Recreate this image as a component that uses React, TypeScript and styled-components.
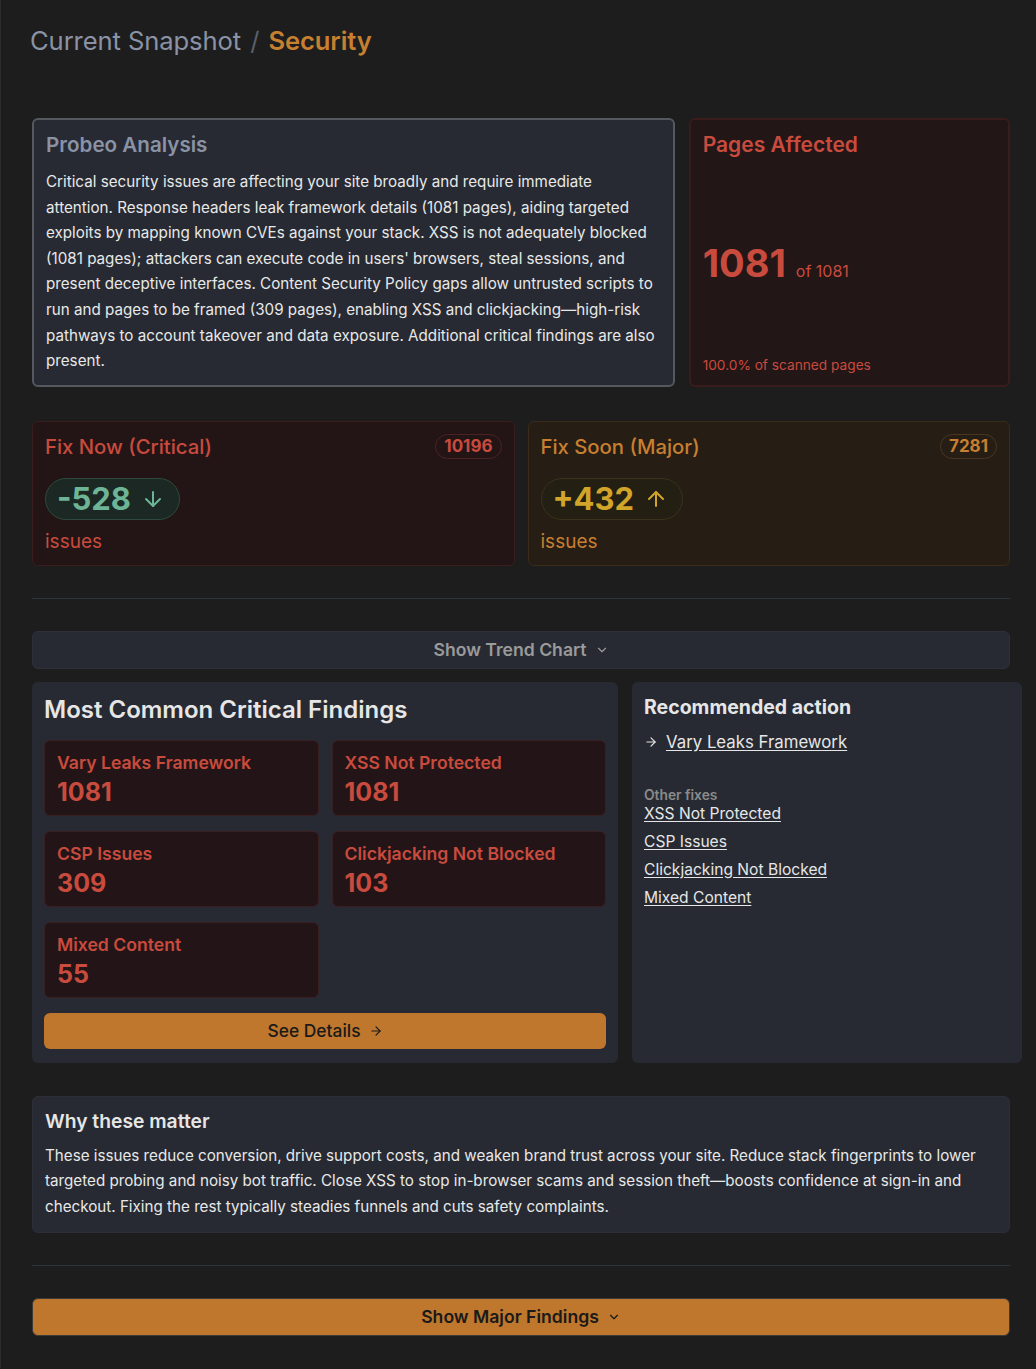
import styled, { createGlobalStyle } from "styled-components";
import { ArrowDown, ArrowUp, ArrowRight, ChevronDown } from "lucide-react";

const GlobalStyle = createGlobalStyle`
  body {
    margin: 0;
    background: #1d1d1d;
    font-family: Inter, "Noto Sans", "Liberation Sans", sans-serif;
    color: #e6e6e6;
    border-left: 1px solid #2b2b2b;
  }
  * {
    box-sizing: border-box;
  }
`;

const RED = "#c84b3e";
const ORANGE = "#c77f30";

const findings = [
  { label: "Vary Leaks Framework", count: 1081 },
  { label: "XSS Not Protected", count: 1081 },
  { label: "CSP Issues", count: 309 },
  { label: "Clickjacking Not Blocked", count: 103 },
  { label: "Mixed Content", count: 55 },
];

const otherFixes = ["XSS Not Protected", "CSP Issues", "Clickjacking Not Blocked", "Mixed Content"];

const App = () => {
  return (
    <>
      <GlobalStyle />
      <Page>
        <Crumbs>
          Current Snapshot <Slash>/</Slash> <Current>Security</Current>
        </Crumbs>

        <TopRow>
          <AnalysisCard>
            <AnalysisTitle>Probeo Analysis</AnalysisTitle>
            <Body>
              Critical security issues are affecting your site broadly and require immediate
              attention. Response headers leak framework details (1081 pages), aiding targeted
              exploits by mapping known CVEs against your stack. XSS is not adequately blocked
              (1081 pages); attackers can execute code in users' browsers, steal sessions, and
              present deceptive interfaces. Content Security Policy gaps allow untrusted scripts to
              run and pages to be framed (309 pages), enabling XSS and clickjacking—high-risk
              pathways to account takeover and data exposure. Additional critical findings are also
              present.
            </Body>
          </AnalysisCard>
          <AffectedCard>
            <AffectedTitle>Pages Affected</AffectedTitle>
            <AffectedValue>
              <Big>1081</Big>
              <Of>of 1081</Of>
            </AffectedValue>
            <AffectedNote>100.0% of scanned pages</AffectedNote>
          </AffectedCard>
        </TopRow>

        <FixRow>
          <FixCard $tone="critical">
            <FixHead>
              <FixTitle $tone="critical">Fix Now (Critical)</FixTitle>
              <Badge $tone="critical">10196</Badge>
            </FixHead>
            <Delta $tone="down">
              -528 <ArrowDown size={24} strokeWidth={2} />
            </Delta>
            <Issues $tone="critical">issues</Issues>
          </FixCard>
          <FixCard $tone="major">
            <FixHead>
              <FixTitle $tone="major">Fix Soon (Major)</FixTitle>
              <Badge $tone="major">7281</Badge>
            </FixHead>
            <Delta $tone="up">
              +432 <ArrowUp size={24} strokeWidth={2} />
            </Delta>
            <Issues $tone="major">issues</Issues>
          </FixCard>
        </FixRow>

        <Divider />

        <ToggleBar $primary={false}>
          Show Trend Chart <ChevronDown size={14} strokeWidth={2} />
        </ToggleBar>

        <MiddleRow>
          <Panel>
            <PanelTitle>Most Common Critical Findings</PanelTitle>
            <FindingGrid>
              {findings.map((f) => (
                <Finding key={f.label}>
                  <FindingLabel>{f.label}</FindingLabel>
                  <FindingCount>{f.count}</FindingCount>
                </Finding>
              ))}
            </FindingGrid>
            <DetailsButton>
              See Details <ArrowRight size={14} strokeWidth={2} />
            </DetailsButton>
          </Panel>
          <Panel>
            <RecTitle>Recommended action</RecTitle>
            <RecLink>
              <ArrowRight size={14} strokeWidth={2} />
              <LinkText>Vary Leaks Framework</LinkText>
            </RecLink>
            <OtherLabel>Other fixes</OtherLabel>
            <OtherList>
              {otherFixes.map((f) => (
                <OtherLink key={f}>{f}</OtherLink>
              ))}
            </OtherList>
          </Panel>
        </MiddleRow>

        <WhyCard>
          <WhyTitle>Why these matter</WhyTitle>
          <Body>
            These issues reduce conversion, drive support costs, and weaken brand trust across your
            site. Reduce stack fingerprints to lower targeted probing and noisy bot traffic. Close
            XSS to stop in-browser scams and session theft—boosts confidence at sign-in and
            checkout. Fixing the rest typically steadies funnels and cuts safety complaints.
          </Body>
        </WhyCard>

        <Divider />

        <ToggleBar $primary>
          Show Major Findings <ChevronDown size={14} strokeWidth={2} />
        </ToggleBar>
      </Page>
    </>
  );
};

export default App;

const Page = styled.div`
  width: 1009px;
  padding: 24px 0 32px 31px;
`;

const Crumbs = styled.h1`
  margin: 0 0 60px -2px;
  font-size: 25.6px;
  line-height: 34px;
  font-weight: 400;
  color: #8a93a6;
  letter-spacing: -0.1px;
`;

const Slash = styled.span`
  color: #5a606b;
  margin: 0 2px;
`;

const Current = styled.span`
  color: ${ORANGE};
  font-weight: 600;
`;

const TopRow = styled.div`
  display: grid;
  grid-template-columns: 2fr 1fr;
  gap: 14px;
`;

const AnalysisCard = styled.div`
  background: #272a32;
  border: 2px solid #55585e;
  border-radius: 6px;
  padding: 11px 12px 11px 12px;
`;

const AnalysisTitle = styled.h2`
  margin: 0 0 10px;
  font-size: 20.6px;
  line-height: 28px;
  font-weight: 600;
  color: #8a93a6;
`;

const Body = styled.p`
  margin: 0;
  font-size: 15.2px;
  line-height: 25.6px;
  color: #e8e8e8;
`;

const AffectedCard = styled.div`
  display: flex;
  flex-direction: column;
  justify-content: space-between;
  background: #231617;
  border: 2px solid #3b1c1c;
  border-radius: 6px;
  padding: 11px 12px 10px;
  color: ${RED};
`;

const AffectedTitle = styled.h2`
  margin: 0;
  font-size: 21px;
  line-height: 28px;
  font-weight: 600;
`;

const AffectedValue = styled.div`
  display: flex;
  align-items: baseline;
  gap: 10px;
  margin-top: 12px;
`;

const Big = styled.span`
  font-size: 38px;
  line-height: 44px;
  font-weight: 700;
`;

const Of = styled.span`
  font-size: 16px;
`;

const AffectedNote = styled.div`
  font-size: 13.7px;
  line-height: 20px;
`;

const FixRow = styled.div`
  display: grid;
  grid-template-columns: 1fr 1fr;
  gap: 13px;
  margin-top: 34px;
`;

type Tone = "critical" | "major";

const FixCard = styled.div<{ $tone: Tone }>`
  background: ${(p) => (p.$tone === "critical" ? "#231516" : "#261d15")};
  border: 1px solid ${(p) => (p.$tone === "critical" ? "#3a1d1d" : "#3b2b1a")};
  border-radius: 6px;
  padding: 11px 12px 9px;
`;

const FixHead = styled.div`
  display: flex;
  justify-content: space-between;
  align-items: center;
  height: 28px;
`;

const FixTitle = styled.h3<{ $tone: Tone }>`
  margin: 0;
  font-size: 20.3px;
  font-weight: 500;
  color: ${(p) => (p.$tone === "critical" ? RED : ORANGE)};
`;

const Badge = styled.span<{ $tone: Tone }>`
  font-size: 17px;
  font-weight: 700;
  line-height: 21px;
  padding: 1px 8px;
  border-radius: 999px;
  border: 1px solid ${(p) => (p.$tone === "critical" ? "#4a2222" : "#4a3520")};
  color: ${(p) => (p.$tone === "critical" ? RED : ORANGE)};
`;

const Delta = styled.div<{ $tone: "up" | "down" }>`
  display: inline-flex;
  align-items: center;
  gap: 10px;
  margin-top: 17px;
  height: 42px;
  padding: 0 14px 0 11px;
  border-radius: 999px;
  font-size: 31px;
  font-weight: 700;
  background: ${(p) => (p.$tone === "down" ? "#1b2823" : "#231f12")};
  border: 1px solid ${(p) => (p.$tone === "down" ? "#2d4a3c" : "#3a321a")};
  color: ${(p) => (p.$tone === "down" ? "#6db596" : "#d1a42a")};
`;

const Issues = styled.div<{ $tone: Tone }>`
  margin-top: 8px;
  font-size: 19px;
  line-height: 28px;
  color: ${(p) => (p.$tone === "critical" ? RED : ORANGE)};
`;

const Divider = styled.hr`
  margin: 32px 0;
  border: 0;
  border-top: 1px solid #2f3340;
`;

const ToggleBar = styled.button<{ $primary: boolean }>`
  display: flex;
  width: 100%;
  align-items: center;
  justify-content: center;
  gap: 8px;
  height: 38px;
  border-radius: 6px;
  font-family: inherit;
  font-size: 17.6px;
  font-weight: 600;
  cursor: pointer;
  background: ${(p) => (p.$primary ? "#bf762d" : "#272a32")};
  border: 1px solid ${(p) => (p.$primary ? "#3a3a3a" : "#2e3139")};
  color: ${(p) => (p.$primary ? "#1a1a1a" : "#9a9a9a")};
`;

const MiddleRow = styled.div`
  display: grid;
  grid-template-columns: 586px 390px;
  gap: 14px;
  margin-top: 13px;
  width: 990px;
`;

const Panel = styled.section`
  background: #272a32;
  border-radius: 6px;
  padding: 13px 12px 14px;
`;

const PanelTitle = styled.h2`
  margin: 0 0 15px;
  font-size: 24px;
  line-height: 30px;
  font-weight: 600;
  color: #e6e6e6;
`;

const FindingGrid = styled.div`
  display: grid;
  grid-template-columns: 1fr 1fr;
  column-gap: 13px;
  row-gap: 15px;
`;

const Finding = styled.div`
  height: 76px;
  background: #231517;
  border: 1px solid #3a1f20;
  border-radius: 6px;
  padding: 11px 12px;
  color: ${RED};
`;

const FindingLabel = styled.div`
  font-size: 17.6px;
  line-height: 22px;
  font-weight: 600;
`;

const FindingCount = styled.div`
  margin-top: 4px;
  font-size: 25px;
  line-height: 28px;
  font-weight: 700;
`;

const DetailsButton = styled.button`
  display: flex;
  width: 100%;
  align-items: center;
  justify-content: center;
  gap: 8px;
  margin-top: 15px;
  height: 36px;
  border: 0;
  border-radius: 6px;
  background: #bf762d;
  color: #1a1a1a;
  font-family: inherit;
  font-size: 17.4px;
  font-weight: 500;
  cursor: pointer;
`;

const RecTitle = styled.h2`
  margin: 0;
  font-size: 19.5px;
  line-height: 24px;
  font-weight: 700;
  color: #e6e6e6;
`;

const RecLink = styled.a`
  display: flex;
  align-items: center;
  gap: 8px;
  margin-top: 12px;
  color: #e6e6e6;
  cursor: pointer;
`;

const LinkText = styled.span`
  font-size: 16.8px;
  line-height: 22px;
  text-decoration: underline;
  text-underline-offset: 2px;
`;

const OtherLabel = styled.div`
  margin-top: 33px;
  font-size: 13.8px;
  line-height: 18px;
  font-weight: 600;
  color: #8a8a8a;
`;

const OtherList = styled.div`
  display: flex;
  flex-direction: column;
  gap: 8px;
`;

const OtherLink = styled.a`
  align-self: flex-start;
  font-size: 15.6px;
  line-height: 20px;
  color: #e6e6e6;
  text-decoration: underline;
  text-underline-offset: 2px;
  cursor: pointer;
`;

const WhyCard = styled.section`
  margin-top: 33px;
  background: #272a32;
  border: 1px solid #2c2f37;
  border-radius: 6px;
  padding: 12px 12px 12px;
`;

const WhyTitle = styled.h2`
  margin: 0 0 10px;
  font-size: 19.3px;
  line-height: 24px;
  font-weight: 600;
  color: #e6e6e6;
`;
